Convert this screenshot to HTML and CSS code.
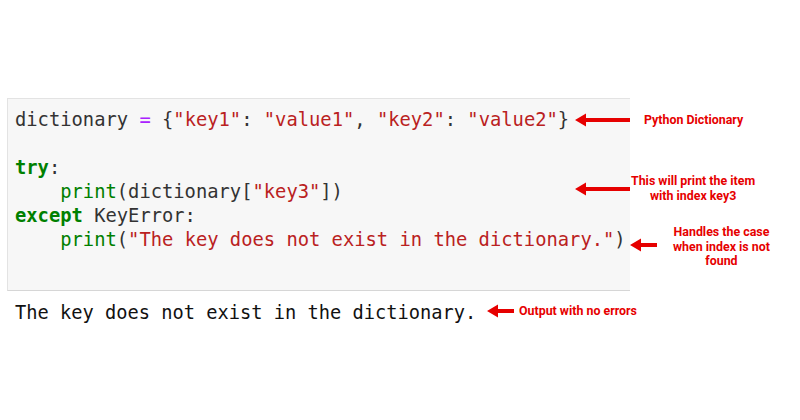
FILE: index.html
```html
<!DOCTYPE html>
<html>
<head>
<meta charset="utf-8">
<link rel="stylesheet" href="styles.css">
</head>
<body>
<div class="page">
  <div class="cell">
    <pre class="code"><span class="n">dictionary</span> <span class="o">=</span> {<span class="s">"key1"</span>: <span class="s">"value1"</span>, <span class="s">"key2"</span>: <span class="s">"value2"</span>}

<span class="k">try</span>:
    <span class="b">print</span>(dictionary[<span class="s">"key3"</span>])
<span class="k">except</span> KeyError:
    <span class="b">print</span>(<span class="s">"The key does not exist in the dictionary."</span>)</pre>
  </div>
  <pre class="output">The key does not exist in the dictionary.</pre>

  <div class="note note1">
    <svg class="arrow long" viewBox="0 0 55 14"><path d="M0 7 L11 0.5 L11 5 L55 5 L55 9 L11 9 L11 13.5 Z" fill="#e60000"/></svg>
    <span class="label">Python Dictionary</span>
  </div>
  <div class="note note2">
    <svg class="arrow long" viewBox="0 0 55 14"><path d="M0 7 L11 0.5 L11 5 L55 5 L55 9 L11 9 L11 13.5 Z" fill="#e60000"/></svg>
    <span class="label">This will print the item<br>with index key3</span>
  </div>
  <div class="note note3">
    <svg class="arrow short" viewBox="0 0 27 14"><path d="M0 7 L11 0.5 L11 5 L27 5 L27 9 L11 9 L11 13.5 Z" fill="#e60000"/></svg>
    <span class="label">Handles the case<br>when index is not<br>found</span>
  </div>
  <div class="note note4">
    <svg class="arrow short" viewBox="0 0 27 14"><path d="M0 7 L11 0.5 L11 5 L27 5 L27 9 L11 9 L11 13.5 Z" fill="#e60000"/></svg>
    <span class="label">Output with no errors</span>
  </div>
</div>
</body>
</html>
```
FILE: styles.css
```css
html, body {
  margin: 0;
  padding: 0;
  background: #ffffff;
}
.page {
  position: relative;
  width: 800px;
  height: 420px;
  padding-top: 98px;
  box-sizing: border-box;
}
.cell {
  margin-left: 7px;
  width: 623px;
  height: 193px;
  box-sizing: border-box;
  background: #f7f7f7;
  border: 1px solid #e3e3e3;
  border-bottom-color: #d6d6d6;
  border-right: none;
  padding: 9px 0 0 7px;
}
.code {
  margin: 0;
  font-family: "DejaVu Sans Mono", "Liberation Mono", monospace;
  font-size: 18.8px;
  line-height: 24px;
  color: #333333;
}
.code .k { color: #008000; font-weight: bold; }
.code .b { color: #008000; }
.code .s { color: #ba2121; }
.code .o { color: #aa22ff; }
.code .n { color: #333333; }
.output {
  margin: 10px 0 0 15px;
  font-family: "DejaVu Sans Mono", "Liberation Mono", monospace;
  font-size: 18.7px;
  line-height: 24px;
  color: #111111;
}
.note {
  position: absolute;
  display: flex;
  align-items: center;
}
.arrow.long { width: 55px; height: 14px; }
.arrow.short { width: 27px; height: 14px; }
.label {
  font-family: Roboto, "Liberation Sans", sans-serif;
  font-weight: bold;
  font-size: 12.4px;
  line-height: 14.5px;
  color: #e60000;
  text-align: center;
}
.note1 { left: 575px; top: 113px; gap: 14px; }
.note2 { left: 575px; top: 174px; gap: 1px; }
.note2 .arrow { align-self: flex-start; margin-top: 8px; }
.note3 { left: 630px; top: 225px; gap: 16px; }
.note3 .arrow { align-self: flex-start; margin-top: 13px; }
.note4 { left: 487px; top: 304px; gap: 5px; }
```
